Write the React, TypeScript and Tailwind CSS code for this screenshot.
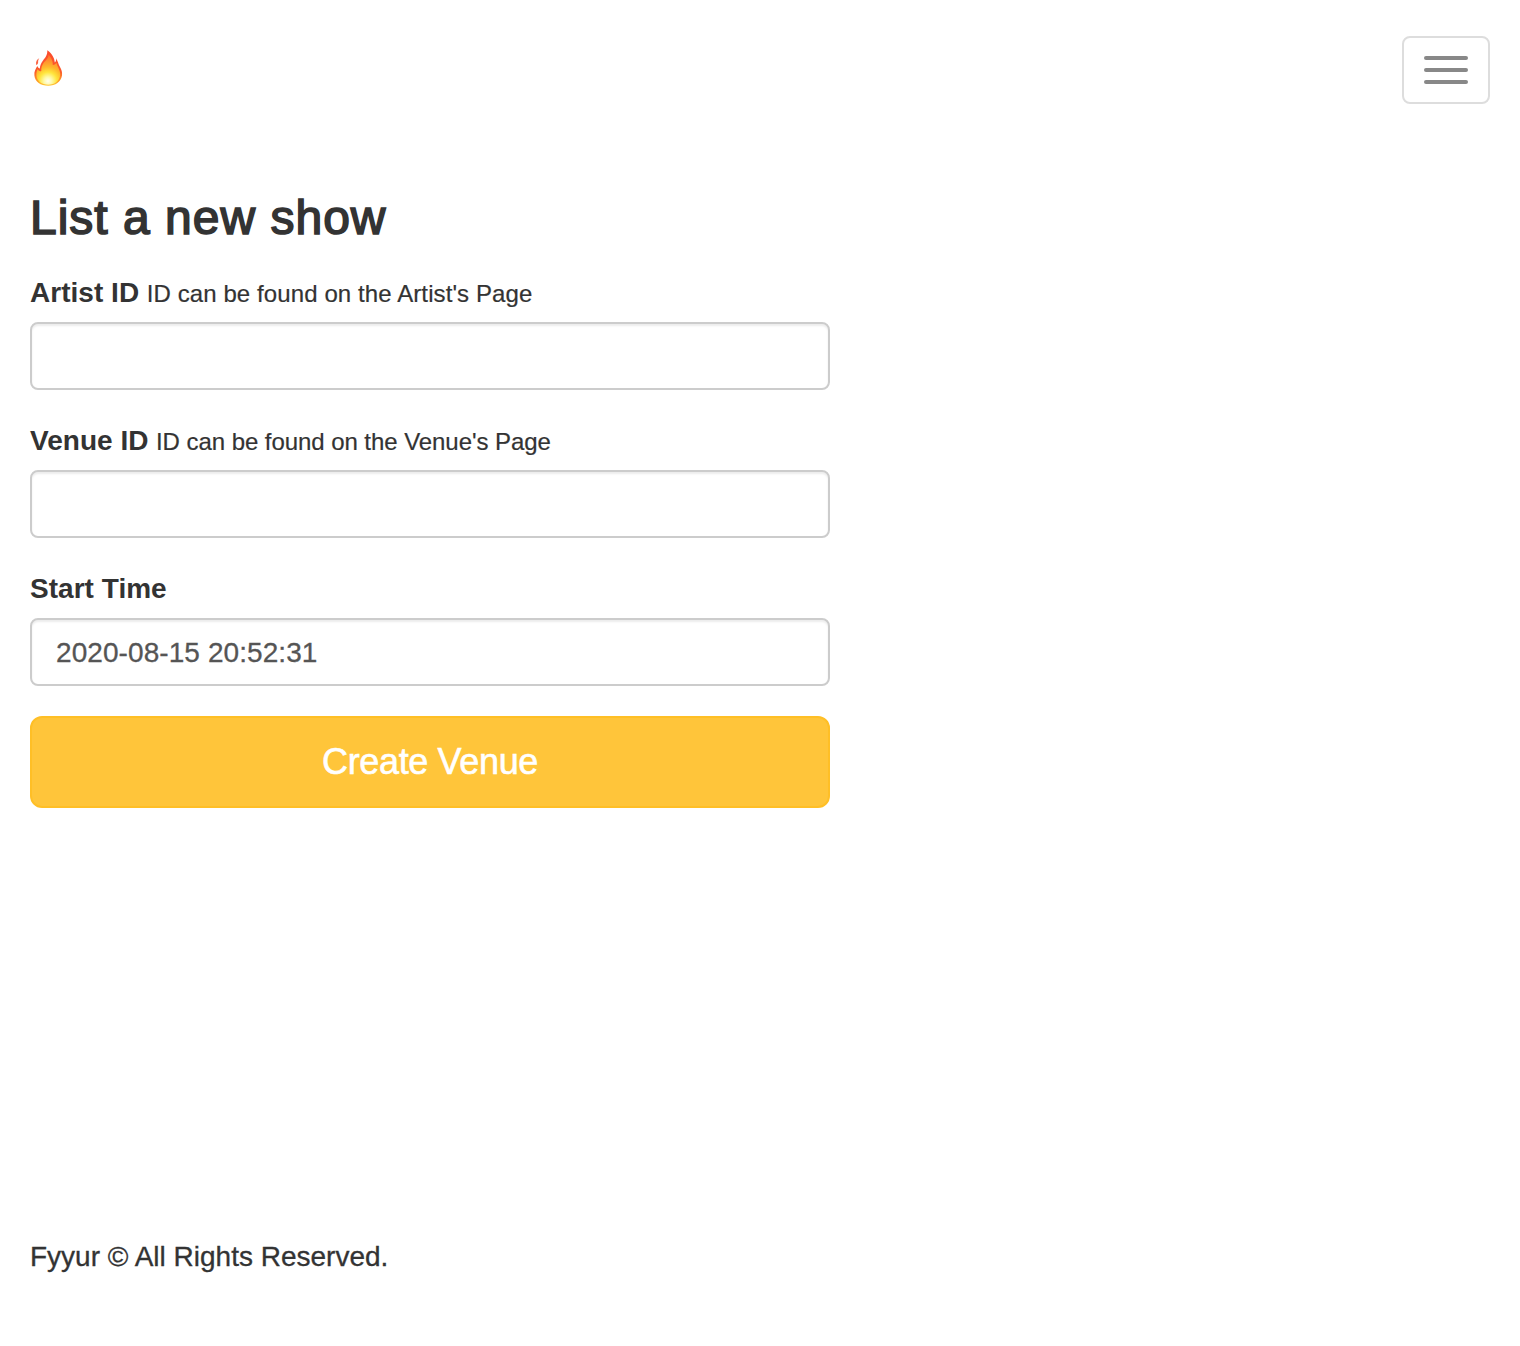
import React from "react";

function Flame() {
  return (
    <svg width="36" height="36" viewBox="0 0 36 36" className="-mt-1 block" aria-label="Fyyur">
      <defs>
        <linearGradient id="outer" x1="0" y1="0" x2="0" y2="1">
          <stop offset="0" stopColor="#fb4a2c" />
          <stop offset="0.6" stopColor="#fb5a2c" />
          <stop offset="0.85" stopColor="#ff9a26" />
          <stop offset="1" stopColor="#ffc935" />
        </linearGradient>
        <radialGradient id="inner" gradientUnits="userSpaceOnUse" cx="18" cy="31" r="27">
          <stop offset="0" stopColor="#fffff0" />
          <stop offset="0.15" stopColor="#fff9a8" />
          <stop offset="0.33" stopColor="#ffe53c" />
          <stop offset="0.52" stopColor="#ffb72c" />
          <stop offset="0.78" stopColor="#ff8a2e" />
          <stop offset="1" stopColor="#ff6a2c" />
        </radialGradient>
      </defs>
      <path fill="url(#outer)" d="M17.300 0.300C20 2 24.500 6.500 24.800 12.500C26 11.500 26.300 10 26 8.200C28 11 28.200 14 30 17C31.500 19.500 32.400 22 32 25.500C31 32 25.500 35.800 18.300 35.800C10.500 35.800 5 32 4.400 25.500C4 21.500 5.500 19 7.300 16C8 17.500 8.800 18.500 9.800 18.500C10 16 11 13 13 10.500C15.500 7.500 17.500 5 17.300 0.300Z" />
      <path fill="#fb6444" d="M9.300 8.300C6.800 9.500 5.700 11.500 6.100 15C7.700 14.500 8.400 13 8.100 11.500C8.100 10.300 8.500 9.300 9.300 8.300Z" />
      <path fill="url(#inner)" d="M18.500 4.500C20.500 7 23 10 22.800 15C24.500 15 25.800 14 26.400 12.500C27.500 17 30.300 20 30.200 24.500C30 31 25 34.800 18.300 34.800C11.500 34.800 6.800 31 6.400 25.500C6.200 22.500 6.800 20.700 7.600 19.300C8.800 21 10 21.500 11.300 21C11 18 11.800 15.500 13.500 13C15.500 10.500 18.500 8.500 18.500 4.500Z" />
    </svg>
  );
}

type FieldProps = { id: string; label: string; hint?: string; value?: string; hintClass?: string };

function Field({ id, label, hint, value, hintClass = "" }: FieldProps) {
  return (
    <div className="mb-[30px]">
      <div className="mb-2.5 flex h-10 items-baseline pt-px text-[28px] leading-10">
        <label htmlFor={id} className="font-bold tracking-[0.03px]">{label}</label>
        {hint && <small className={`ml-[7.500px] text-[24px] [-webkit-text-stroke:0.2px_#333] ${hintClass}`}>{hint}</small>}
      </div>
      <input id={id} defaultValue={value} className="block h-[68px] w-full rounded-lg border-2 border-[#ccc] bg-white px-6 pt-0.5 text-[28px] tracking-[0.08px] text-[#555] shadow-[inset_0_2px_2px_rgba(0,0,0,0.075)] outline-none [-webkit-text-stroke:0.3px_#555]" />
    </div>
  );
}

export default function App() {
  return (
    <div className="flex h-[1346px] flex-col bg-white px-[30px] font-['Liberation_Sans',Arial,sans-serif] text-[#333]">
      <header className="flex h-[140px] items-center justify-between">
        <Flame />
        <button aria-label="Toggle navigation" className="flex h-[68px] w-[88px] flex-col items-center justify-center gap-2 rounded-lg border-2 border-[#ddd]">
          <span className="h-1 w-11 rounded-[2px] bg-[#888]" />
          <span className="h-1 w-11 rounded-[2px] bg-[#888]" />
          <span className="h-1 w-11 rounded-[2px] bg-[#888]" />
        </button>
      </header>
      <main className="w-[800px] pt-[51px]">
        <h1 className="mb-[27px] text-[48px] leading-[54px] tracking-[1px] [-webkit-text-stroke:1.6px_#333]">List a new show</h1>
        <form>
          <Field id="artist" label="Artist ID" hint="ID can be found on the Artist's Page" hintClass="tracking-[0.1px]" />
          <Field id="venue" label="Venue ID" hint="ID can be found on the Venue's Page" hintClass="tracking-[-0.06px]" />
          <Field id="start" label="Start Time" value="2020-08-15 20:52:31" />
          <button type="button" className="h-[92px] w-full rounded-xl border-2 border-[#ffbf26] bg-[#ffc53a] text-[36px] tracking-[-0.35px] text-white [-webkit-text-stroke:0.6px_#fff]">Create Venue</button>
        </form>
      </main>
      <footer className="mt-auto pb-[69px] text-[28px] leading-10 [-webkit-text-stroke:0.3px_#333]">Fyyur © All Rights Reserved.</footer>
    </div>
  );
}
